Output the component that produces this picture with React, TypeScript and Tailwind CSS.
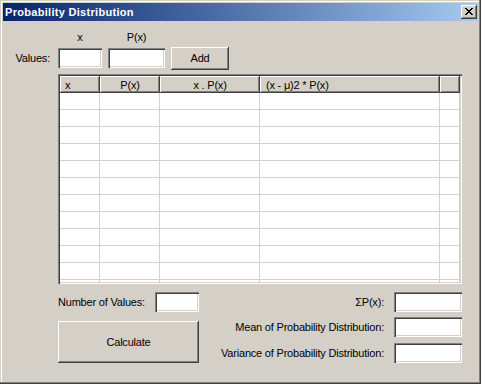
import React from "react";

const sunken =
  "bg-white shadow-[inset_1px_1px_0_#808080,inset_2px_2px_0_#404040,inset_-1px_-1px_0_#ffffff,inset_-2px_-2px_0_#d4d0c8]";
const raised =
  "bg-[#d4d0c8] shadow-[inset_-1px_-1px_0_#404040,inset_1px_1px_0_#ffffff,inset_-2px_-2px_0_#808080]";
const headerCell =
  "h-[17px] shrink-0 bg-[#d4d0c8] pt-[3px] leading-[13px] shadow-[inset_-1px_-1px_0_#404040,inset_1px_1px_0_#ffffff,inset_-2px_-2px_0_#808080]";
const bodyCell = "h-[17px] shrink-0 border-r border-b border-[#d4d0c8] bg-white";

function CloseGlyph() {
  return (
    <svg width="8" height="7" viewBox="0 0 8 7" shapeRendering="crispEdges">
      <path
        fill="#000"
        d="M0 0h2v1H0zM6 0h2v1H6zM1 1h2v1H1zM5 1h2v1H5zM2 2h4v1H2zM3 3h2v1H3zM2 4h4v1H2zM1 5h2v1H1zM5 5h2v1H5zM0 6h2v1H0zM6 6h2v1H6z"
      />
    </svg>
  );
}

function ResultRow({ label, className }: { label: string; className?: string }) {
  return (
    <div className={"flex items-center h-[20px] " + (className ?? "")}>
      <span className="whitespace-nowrap">{label}</span>
      <div className={sunken + " ml-[10px] w-[68px] h-[20px]"} />
    </div>
  );
}

export default function App() {
  const rows = Array.from({ length: 12 });
  return (
    <div className="w-[481px] h-[384px] overflow-hidden bg-[#d4d0c8] shadow-[inset_-1px_-1px_0_#404040,inset_-2px_-2px_0_#808080,inset_1px_1px_0_#d4d0c8,inset_2px_2px_0_#ffffff] pt-[3px] px-[3px] flex flex-col text-black text-[11px] leading-[13px] tracking-[-0.2px] font-['Liberation_Sans',Arial,sans-serif]">
      {/* Title bar */}
      <div className="h-[18px] shrink-0 flex items-center bg-linear-to-r from-[#0a246a] to-[#a6caf0] pl-[2px] pr-[1px]">
        <span className="text-white font-bold text-[11px] tracking-[0.3px] whitespace-nowrap">
          Probability Distribution
        </span>
        <div className={raised + " ml-auto w-[16px] h-[14px] pl-[4px] pt-[3px] flex items-start"}>
          <CloseGlyph />
        </div>
      </div>

      {/* Column labels */}
      <div className="mt-[10px] pl-[55px] flex">
        <div className="w-[44px] text-center">x</div>
        <div className="ml-[6px] w-[57px] text-center">P(x)</div>
      </div>

      {/* Values row */}
      <div className="mt-[3px] flex items-start h-[23px]">
        <span className="w-[55px] text-right pr-[8px] mt-[5px]">Values:</span>
        <div className={sunken + " w-[44px] h-[20px] mt-[1px]"} />
        <div className={sunken + " ml-[6px] w-[57px] h-[20px] mt-[1px]"} />
        <div className={raised + " ml-[6px] w-[58px] h-[23px] flex items-center justify-center"}>Add</div>
      </div>

      {/* Grid */}
      <div className={sunken + " ml-[55px] mt-[4px] w-[404px] h-[210px] shrink-0 p-[2px]"}>
        <div className="w-full h-full overflow-hidden flex flex-col">
          <div className="flex shrink-0">
            <div className={headerCell + " w-[40px] pl-[5px]"}>x</div>
            <div className={headerCell + " w-[60px] text-center"}>P(x)</div>
            <div className={headerCell + " w-[100px] text-center"}>x . P(x)</div>
            <div className={headerCell + " w-[180px] pl-[6px]"}>(x - μ)2 * P(x)</div>
            <div className={headerCell + " flex-1"} />
          </div>
          {rows.map((_, i) => (
            <div key={i} className="flex shrink-0">
              <div className={bodyCell + " w-[40px]"} />
              <div className={bodyCell + " w-[60px]"} />
              <div className={bodyCell + " w-[100px]"} />
              <div className={bodyCell + " w-[180px]"} />
              <div className={bodyCell + " flex-1"} />
            </div>
          ))}
        </div>
      </div>

      {/* Bottom section */}
      <div className="mt-[8px] ml-[55px] w-[404px] flex">
        <div className="w-[141px] flex flex-col">
          <div className="flex items-center h-[20px]">
            <span className="w-[97px] whitespace-nowrap">Number of Values:</span>
            <div className={sunken + " w-[44px] h-[20px]"} />
          </div>
          <div className={raised + " mt-[9px] w-[141px] h-[42px] flex items-center justify-center"}>
            Calculate
          </div>
        </div>
        <div className="flex-1 flex flex-col items-end">
          <ResultRow label="ΣP(x):" />
          <ResultRow label="Mean of Probability Distribution:" className="mt-[5px]" />
          <ResultRow label="Variance of Probability Distribution:" className="mt-[6px]" />
        </div>
      </div>
    </div>
  );
}
